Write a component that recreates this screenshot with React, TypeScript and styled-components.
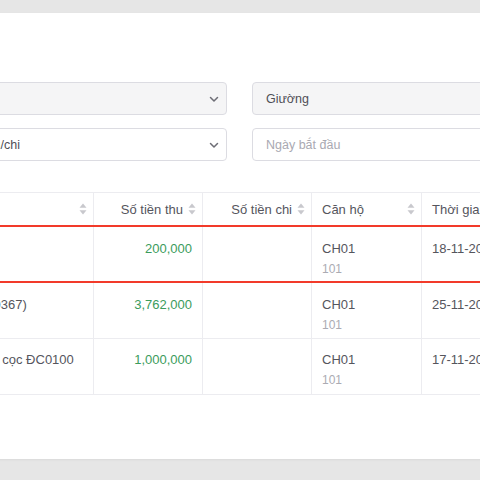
import React from "react";
import styled, { createGlobalStyle } from "styled-components";

const Global = createGlobalStyle`
  html, body { margin: 0; padding: 0; }
  body {
    background: #e6e6e6;
    font-family: "Liberation Sans", Arial, Helvetica, sans-serif;
    overflow: hidden;
  }
`;

const Page = styled.div`
  width: 480px;
  height: 480px;
  overflow: hidden;
  padding-top: 13px;
  box-sizing: border-box;
  background: #e6e6e6;
`;

const Card = styled.div`
  margin-left: -400px;
  width: 1500px;
  height: 446px;
  box-sizing: border-box;
  background: #ffffff;
  box-shadow: 0 1px 2px rgba(0, 0, 0, 0.06);
  padding: 69px 0 0 22px;
`;

const Filters = styled.div`
  display: grid;
  grid-template-columns: 295px 285px 285px;
  column-gap: 25px;
  row-gap: 13px;
`;

const Field = styled.div<{ $filled?: boolean }>`
  height: 33px;
  box-sizing: border-box;
  border: 1px solid #dcdce2;
  border-radius: 4px;
  background: ${(p) => (p.$filled ? "#f5f5f6" : "#ffffff")};
  display: flex;
  align-items: center;
  justify-content: space-between;
  padding: 0 7px 0 13px;
`;

const FieldText = styled.span<{ $placeholder?: boolean }>`
  font-size: 12.5px;
  color: ${(p) => (p.$placeholder ? "#a9a9b2" : "#4f4f57")};
  white-space: nowrap;
`;

const Chevron = () => (
  <svg width="10" height="8" viewBox="0 0 10 8">
    <path d="M1.5 2.5 L5 6 L8.5 2.5" fill="none" stroke="#6d6d75" strokeWidth="1.5" strokeLinecap="round" strokeLinejoin="round" />
  </svg>
);

const Table = styled.table`
  margin-top: 31px;
  border-collapse: collapse;
  table-layout: fixed;
  width: 1300px;
  font-size: 13px;
  color: #55555d;
`;

const Th = styled.th<{ $right?: boolean }>`
  height: 32px;
  padding: 0 6px 0 10px;
  border-top: 1px solid #ececf0;
  border-left: 1px solid #ececf0;
  border-right: 1px solid #ececf0;
  font-weight: normal;
  color: #55555d;
  text-align: ${(p) => (p.$right ? "right" : "left")};
  white-space: nowrap;
  background: #ffffff;
`;

const HeadInner = styled.div<{ $right?: boolean }>`
  display: flex;
  align-items: center;
  justify-content: ${(p) => (p.$right ? "flex-end" : "space-between")};
  gap: 5px;
`;

const SortIcon = () => (
  <svg width="8" height="12" viewBox="0 0 8 12">
    <path d="M4 0.5 L7.5 4.8 L0.5 4.8 Z" fill="#c8c8cd" />
    <path d="M4 11.5 L7.5 7.2 L0.5 7.2 Z" fill="#c8c8cd" />
  </svg>
);

const Tr = styled.tr<{ $active?: boolean }>`
  & > td {
    border-top: ${(p) => (p.$active ? "2px solid #f23a2a" : "1px solid #ececf0")};
    border-bottom: ${(p) => (p.$active ? "2px solid #f23a2a" : "1px solid #ececf0")};
  }
`;

const Td = styled.td<{ $right?: boolean }>`
  height: 56px;
  box-sizing: border-box;
  vertical-align: top;
  padding: 11.5px 10px 0;
  border-left: 1px solid #ececf0;
  border-right: 1px solid #ececf0;
  text-align: ${(p) => (p.$right ? "right" : "left")};
  white-space: nowrap;
  line-height: 20px;
`;

const Money = styled.span`
  color: #3b9c5c;
`;

const Sub = styled.div`
  font-size: 12px;
  color: #ababb3;
  line-height: 18px;
  margin-top: 1px;
`;

const rows = [
  { stt: "1", code: "PT0412", desc: "", thu: "200,000", date: "18-11-2023", active: true },
  { stt: "2", code: "PT0367", desc: "Thu tiền (P0367)", thu: "3,762,000", date: "25-11-2023" },
  { stt: "3", code: "PT0100", desc: "Thu tiền đặt cọc ĐC0100", thu: "1,000,000", date: "17-11-2023" },
];

export default function App() {
  return (
    <>
      <Global />
      <Page>
        <Card>
          <Filters>
            <Field>
              <FieldText $placeholder>Tìm kiếm</FieldText>
            </Field>
            <Field $filled>
              <FieldText $placeholder>Dự án</FieldText>
              <Chevron />
            </Field>
            <Field $filled>
              <FieldText>Giường</FieldText>
            </Field>
            <Field>
              <FieldText $placeholder>Mã phiếu</FieldText>
            </Field>
            <Field>
              <FieldText>Loại thu/chi</FieldText>
              <Chevron />
            </Field>
            <Field>
              <FieldText $placeholder>Ngày bắt đầu</FieldText>
            </Field>
          </Filters>
          <Table>
            <colgroup>
              <col style={{ width: 80 }} />
              <col style={{ width: 217 }} />
              <col style={{ width: 174 }} />
              <col style={{ width: 109 }} />
              <col style={{ width: 109 }} />
              <col style={{ width: 110 }} />
              <col style={{ width: 160 }} />
              <col />
            </colgroup>
            <thead>
              <tr>
                <Th>STT</Th>
                <Th>Mã phiếu</Th>
                <Th>
                  <HeadInner>
                    <span>Nội dung</span>
                    <SortIcon />
                  </HeadInner>
                </Th>
                <Th $right>
                  <HeadInner $right>
                    <span>Số tiền thu</span>
                    <SortIcon />
                  </HeadInner>
                </Th>
                <Th $right>
                  <HeadInner $right>
                    <span>Số tiền chi</span>
                    <SortIcon />
                  </HeadInner>
                </Th>
                <Th>
                  <HeadInner>
                    <span>Căn hộ</span>
                    <SortIcon />
                  </HeadInner>
                </Th>
                <Th>
                  <HeadInner>
                    <span>Thời gian</span>
                    <SortIcon />
                  </HeadInner>
                </Th>
                <Th>Người tạo</Th>
              </tr>
            </thead>
            <tbody>
              {rows.map((r, i) => (
                <Tr key={i} $active={r.active}>
                  <Td>{r.stt}</Td>
                  <Td>{r.code}</Td>
                  <Td>{r.desc}</Td>
                  <Td $right>
                    <Money>{r.thu}</Money>
                  </Td>
                  <Td $right></Td>
                  <Td>
                    CH01
                    <Sub>101</Sub>
                  </Td>
                  <Td>{r.date}</Td>
                  <Td>Admin</Td>
                </Tr>
              ))}
            </tbody>
          </Table>
        </Card>
      </Page>
    </>
  );
}
